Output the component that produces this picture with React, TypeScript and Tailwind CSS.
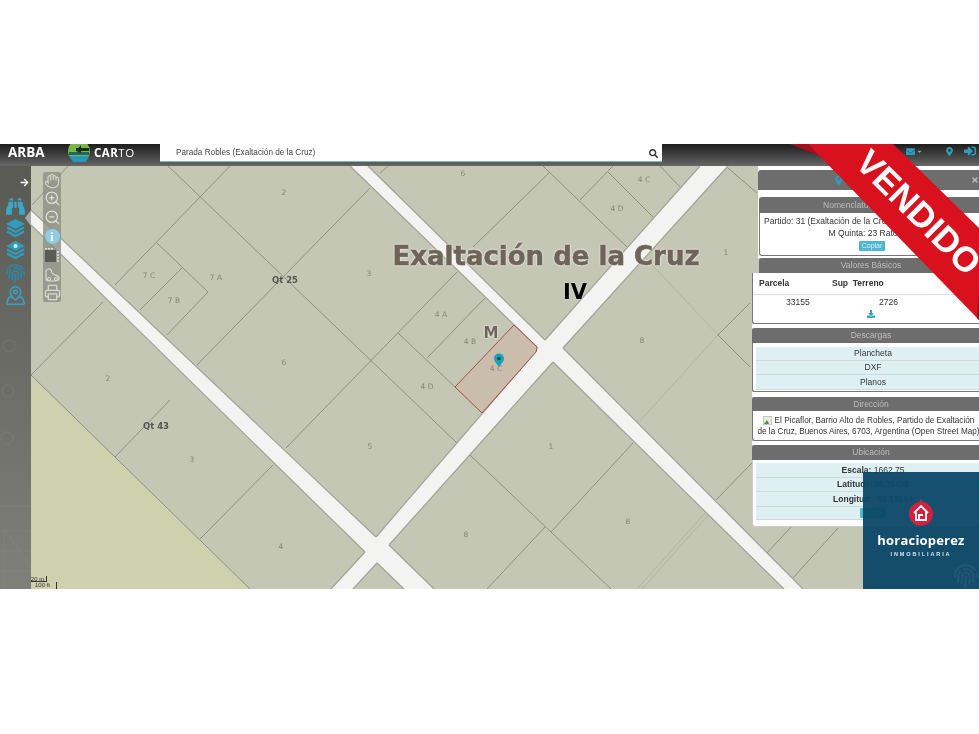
import React from "react";
import { FaBinoculars, FaArrowRight, FaSearch, FaEnvelope, FaCaretDown, FaDownload, FaSignInAlt, FaFingerprint, FaMapMarkerAlt, FaTimes } from "react-icons/fa";
import { Hand, ZoomIn, ZoomOut, Printer, MapPinned } from "lucide-react";

const lines: number[][] = [
  [32,205,68,166],[168,166,457,443],[230,166,115,285],[370,188,197,365],[170,400,115,457],
  [157,243,208,292],[182,268,140,310],[208,292,167,335],[103,302,31,375],[31,375,250,589],
  [200,539,273,465],[380,173,388,166],[543,166,627,247],[580,200,613,166],[608,172,653,217],
  [660,166,680,187],[550,172,473,247],[728,168,757,193],[718,335,750,303],
  [718,335,750,367],[470,455,611,589],[551,532,633,443],[545,527,487,589],
  [457,272,286,448],[398,333,455,387],[427,358,485,298],[752,463,716,500],[791,527,767,553],
  [838,528,793,578],
];
const faint: number[][] = [[640,252,718,335],[718,335,639,422],[705,513,637,589],[710,513,642,589]];
const roadEdges: number[][] = [
  [31,210,376,537],[389,545,434,589],[31,225,365,552],[377,563,404,589],[331,589,365,552],
  [376,537,537,350],[545,340,700,166],[563,348,728,166],[389,545,553,362],[377,563,353,589],
  [350,166,537,347],[553,362,784,589],[368,166,545,340],[563,348,803,589],
];
const labels: [string, number, number][] = [
  ["2",284,193],["6",463,174],["4 C",644,180],["4 D",617,209],["1",726,253],["3",369,274],
  ["7 C",149,276],["7 A",216,278],["7 B",174,301],["6",284,363],["2",108,379],["4 A",441,315],
  ["4 B",470,342],["4 C",496,369],["4 D",427,387],["8",642,341],["5",370,447],["1",551,447],
  ["3",192,460],["8",466,535],["8",628,522],["4",281,547],
];

function Layers({ dot }: { dot?: boolean }) {
  return (
    <svg width="21" height="20" viewBox="0 0 21 20" fill="none" className="text-[#2f9dbd]">
      <path d="M10.500 1 20 6 10.500 11 1 6Z" fill="currentColor" />
      <path d="M2 9.500 10.500 14 19 9.500M2 13.500 10.500 18 19 13.500" stroke="currentColor" strokeWidth="2.400" />
      {dot && <circle cx="10.500" cy="6" r="2" fill="#d8f3fb" />}
    </svg>
  );
}

function Title({ children, className }: { children: React.ReactNode; className: string }) {
  return (
    <div className={`flex items-center justify-center bg-[#6d6d6d] text-[#bdbdbd] rounded-t-[3px] ${className}`}>
      {children}
    </div>
  );
}

function Row({ children, className }: { children: React.ReactNode; className: string }) {
  return (
    <div className={`flex items-center justify-center bg-[#dff0f5] border-b border-[#cfdadd] text-[#333] ${className}`}>
      {children}
    </div>
  );
}

export default function App() {
  return (
    <div className="w-[979px] h-[734px] overflow-hidden bg-white pt-[144px] font-['Liberation_Sans',sans-serif] blur-[0.6px]">
      <div className="relative h-[445px] overflow-hidden bg-[#c5c7b5]">
        {/* map */}
        <svg className="absolute left-0 top-0" width="979" height="445" viewBox="0 144 979 445">
          <polygon points="31,375 250,589 31,589" fill="#cdd1ad" />
          {lines.map((l, i) => (
            <line key={i} x1={l[0]} y1={l[1]} x2={l[2]} y2={l[3]} stroke="#8f9085" strokeWidth="1" />
          ))}
          {faint.map((l, i) => (
            <line key={i} x1={l[0]} y1={l[1]} x2={l[2]} y2={l[3]} stroke="#b3b4a3" strokeWidth="1" />
          ))}
          <polygon points="31,210 376,537 389,545 434,589 404,589 377,563 365,552 31,225" fill="#f3f3f1" />
          <polygon points="331,589 365,552 376,537 537,350 545,340 700,166 728,166 563,348 553,362 389,545 377,563 353,589" fill="#f3f3f1" />
          <polygon points="350,166 537,347 553,362 784,589 803,589 563,348 545,340 368,166" fill="#f3f3f1" />
          {roadEdges.map((l, i) => (
            <line key={i} x1={l[0]} y1={l[1]} x2={l[2]} y2={l[3]} stroke="#a2a396" strokeWidth="1.200" />
          ))}
          <polygon points="514,325 537,347 536,352 482,413 455,387" fill="#cbbdab" stroke="#a84c4c" strokeWidth="1" />
          <path d="M499 367c-3-4-5-6-5-8.500a5 5 0 0 1 10 0c0 2.500-2 4.500-5 8.500Z" fill="#17a2b8" />
          <circle cx="499" cy="358.500" r="1.800" fill="#0b3f4a" />
        </svg>

        {labels.map(([t, x, y], i) => (
          <span
            key={i}
            className="absolute -translate-x-1/2 -translate-y-1/2 whitespace-nowrap font-['DejaVu_Sans',sans-serif] text-[7.500px] text-[#85867c]"
            style={{ left: x, top: y - 144 }}
          >
            {t}
          </span>
        ))}
        <span className="absolute left-[285px] top-[136px] -translate-x-1/2 -translate-y-1/2 font-['DejaVu_Sans',sans-serif] text-[8.500px] font-bold text-[#55564e]">Qt 25</span>
        <span className="absolute left-[156px] top-[282px] -translate-x-1/2 -translate-y-1/2 font-['DejaVu_Sans',sans-serif] text-[8.500px] font-bold text-[#55564e]">Qt 43</span>
        <span className="absolute left-[546px] top-[112px] -translate-x-1/2 -translate-y-1/2 whitespace-nowrap font-['DejaVu_Sans',sans-serif] text-[26px] font-bold text-[#6f6458] [-webkit-text-stroke:0.5px_#6f6458] [text-shadow:0_0_2px_#eee,0_0_2px_#eee,0_0_2px_#eee]">Exaltación de la Cruz</span>
        <span className="absolute left-[491px] top-[189px] -translate-x-1/2 -translate-y-1/2 font-['DejaVu_Sans',sans-serif] text-[15px] font-bold text-[#6f6458] [text-shadow:0_0_2px_#eee,0_0_2px_#eee]">M</span>
        <span className="absolute left-[575px] top-[149px] -translate-x-1/2 -translate-y-1/2 font-['DejaVu_Sans',sans-serif] text-[21px] font-bold text-black [text-shadow:0_0_2px_#eee]">IV</span>

        {/* scale */}
        <div className="absolute left-[28px] bottom-0 w-[29px] h-[13px]">
          <div className="h-[6px] w-[19px] border-l border-r border-b border-[#333] text-[6px] leading-[6px] text-center text-[#333]">20 m</div>
          <div className="h-[7px] w-[29px] border-l border-r border-[#333] text-[6px] leading-[7px] text-center text-[#333]">100 ft</div>
        </div>

        {/* header */}
        <header className="relative flex h-[22px] items-start bg-gradient-to-b from-[#1d1d1d] to-[#666866]">
          <div className="flex w-[160px] shrink-0 items-center h-[17px] leading-[17px]">
            <span className="ml-[8px] w-[59px] text-[13.500px] font-bold text-white font-['Open_Sans',sans-serif]">ARBA</span>
            <svg width="24" height="20" viewBox="0 0 24 20" className="mt-[1px]">
              <circle cx="12" cy="8" r="11" fill="#7ab648" />
              <path d="M2 13h20l-3 6H6Z" fill="#2b96b8" />
              <path d="M2 9h20v3H2Z" fill="#17696f" />
              <path d="M9 5h13v3H9Zm0 3 5-6v8Z" fill="#1f2a22" />
            </svg>
            <span className="ml-[3px] text-[11.500px] font-bold tracking-[0.5px] text-white font-['Open_Sans',sans-serif]">CAR<span className="font-normal">TO</span></span>
          </div>
          <div className="flex h-[18px] w-[502px] shrink-0 items-center justify-between border-b border-[#7fb7bd] bg-white pl-[16px] pr-[4px] pt-[1px] text-[8.200px] text-[#444]">
            <span>Parada Robles (Exaltación de la Cruz)</span>
            <FaSearch className="text-[9px] text-[#333]" />
          </div>
          <div className="flex flex-1 h-[14px] items-center justify-end pr-[3px]">
            <FaEnvelope className="text-[9px] text-[#2f9dbd]" />
            <FaCaretDown className="ml-[1px] mr-[22px] text-[7px] text-[#8aa]" />
            <FaMapMarkerAlt className="mr-[10px] text-[9px] text-[#2f9dbd]" />
            <FaSignInAlt className="text-[12px] text-[#2f9dbd]" />
          </div>
        </header>

        {/* sidebar */}
        <nav className="absolute left-0 top-[22px] bottom-0 w-[31px] overflow-hidden flex flex-col items-center bg-gradient-to-b from-[#5a5a55] to-[#7f807a]">
          <FaArrowRight className="ml-[17px] mt-[12px] text-[9px] text-white" />
          <FaBinoculars className="mt-[10px] text-[19px] text-[#3aa6c8]" />
          <div className="mt-[2px]"><Layers /></div>
          <div className="mt-[2px]"><Layers dot /></div>
          <FaFingerprint className="mt-[4px] text-[19px] text-[#33849f]" />
          <MapPinned size={21} strokeWidth={1.700} className="mt-[2px] text-[#35a3c5]" />
          <svg className="absolute left-[25px] top-[42px]" width="6" height="20" viewBox="0 0 6 20">
            <polygon points="6,2 0,10 6,18" fill="#a6a6a2" />
          </svg>
          <svg className="absolute left-0 top-[170px] opacity-50" width="31" height="253" viewBox="0 0 31 253" fill="none" stroke="#8b8c85" strokeWidth="0.700">
            <circle cx="9" cy="10" r="6" />
            <circle cx="8" cy="55" r="6" />
            <circle cx="7" cy="102" r="6" />
            <path d="M0 170h31M0 195h31M0 215h31M0 235h31M4 195v58M4 192 31 232" />
          </svg>
        </nav>

        {/* tools */}
        <div className="absolute left-[43px] top-[28px] flex h-[130px] w-[18px] flex-col items-center rounded-[2px] bg-[#8d8e85]/80 pt-[1px] text-[#d9d9d4]">
          <Hand size={16} strokeWidth={1.600} />
          <ZoomIn size={17} strokeWidth={1.700} className="mt-[1px] text-[#e0e0dc]" />
          <ZoomOut size={17} strokeWidth={1.700} className="mt-[2px] text-[#e0e0dc]" />
          <span className="mt-[3px] flex h-[15px] w-[15px] items-center justify-center rounded-full bg-[#8fcde6] font-['Liberation_Serif',serif] text-[12px] font-bold text-white">i</span>
          <svg width="16" height="15" viewBox="0 0 16 15" className="mt-[4px]">
            <rect x="1" y="2" width="11" height="12" fill="#5b5b55" />
            <path d="M1 .8h9M13 4h2M13 7h2M13 10h2M13 13h2" stroke="#e0e0dc" strokeWidth="1.600" strokeDasharray="2 1" />
          </svg>
          <svg width="17" height="15" viewBox="0 0 17 15" fill="none" stroke="#d9d9d4" strokeWidth="1.200" className="mt-[4px]">
            <path d="M2 10V4c0-2 4-3 5-1l1 3c1 2 7 2 7 5 0 2-2 3-4 3H4c-2 0-2-2-2-4Z" />
            <circle cx="5" cy="12" r="1.500" />
            <circle cx="12" cy="12" r="1.500" />
          </svg>
          <Printer size={17} strokeWidth={1.800} className="mt-[2px]" />
        </div>

        {/* right panels */}
        <aside className="absolute -right-[11px] top-[22px] flex w-[238px] flex-col text-[8.500px] leading-[11px] text-[#333]">
          <div className="ml-[6px] flex flex-col bg-white pt-[4px]">
            <div className="relative flex h-[20px] items-center justify-center rounded-tl-[3px] bg-[#6d6d6d]">
              <FaMapMarkerAlt className="mr-[70px] text-[10px] text-[#2f9dbd]" />
              <FaTimes className="absolute right-[11px] text-[8px] text-[#bbb]" />
            </div>
            <div className="mt-[7px] flex flex-col">
              <Title className="h-[16px] ml-[1px] pr-[50px]">Nomenclatura</Title>
              <div className="ml-[1px] flex h-[43px] flex-col items-center overflow-hidden rounded-b-[3px] border-l border-b border-[#777] pt-[3px]">
                <span className="self-start whitespace-nowrap pl-[4px]">Partido: 31 (Exaltación de la Cruz) Circunscripción: IV</span>
                <span className="mr-[24px] mt-[1px]">M Quinta: 23 Rato</span>
                <span className="mr-[6px] mt-[2px] rounded-[1px] bg-[#4fb8cf] px-[3px] text-[7px] leading-[10px] text-[#d5f2f8]">Copiar</span>
              </div>
            </div>
            <div className="h-[2px]" />
          </div>
          <Title className="ml-[7px] h-[15px] pr-[7px]">Valores Básicos</Title>
          <div className="flex h-[51px] flex-col rounded-bl-[3px] border-l border-b border-[#777] bg-white">
            <div className="flex h-[22px] items-center border-b border-[#ddd] font-bold">
              <span className="ml-[6px] w-[73px]">Parcela</span>
              <span>Sup&nbsp; Terreno</span>
            </div>
            <div className="flex h-[14px] items-center">
              <span className="ml-[33px] w-[93px]">33155</span>
              <span>2726</span>
            </div>
            <FaDownload className="ml-[114px] mt-[1px] text-[8px] text-[#3a9fc0]" />
          </div>
          <div className="h-[4px] bg-white" />
          <Title className="h-[15px]">Descargas</Title>
          <div className="flex h-[49px] flex-col rounded-bl-[3px] border-l border-b border-[#777] bg-white pl-[3px] pt-[4px]">
            <Row className="h-[14px]">Plancheta</Row>
            <Row className="h-[14px]">DXF</Row>
            <Row className="h-[15px]">Planos</Row>
          </div>
          <div className="h-[5px] bg-white" />
          <Title className="h-[14px]">Dirección</Title>
          <div className="flex h-[30px] flex-col items-center rounded-bl-[3px] border-l border-b border-[#777] bg-white pt-[4px] pr-[6px] whitespace-nowrap text-[8.200px]">
            <span className="flex items-center">
              <svg width="9" height="9" viewBox="0 0 9 9" className="mr-[3px]">
                <rect width="9" height="9" fill="#e6ebe1" stroke="#aaa" />
                <path d="M1 8 4 4l2 4Z" fill="#5a8a3a" />
              </svg>
              El Picaflor, Barrio Alto de Robles, Partido de Exaltación
            </span>
            <span>de la Cruz, Buenos Aires, 6703, Argentina (Open Street Map)</span>
          </div>
          <div className="h-[4px] bg-white" />
          <Title className="h-[15px]">Ubicación</Title>
          <div className="flex h-[67px] flex-col rounded-bl-[4px] border-l border-b border-[#ccc] bg-white pl-[3px] pt-[3px]">
            <Row className="h-[15px]"><b>Escala:</b>&nbsp;1662.75</Row>
            <Row className="h-[14px]"><b>Latitud:</b>&nbsp;-34.39435</Row>
            <Row className="h-[15px]"><b>Longitud:</b>&nbsp;-59.13594</Row>
            <Row className="h-[13px]">
              <span className="rounded-[1px] bg-[#4fb8cf] px-[3px] text-[7px] leading-[10px] text-[#d5f2f8]">Copiar</span>
            </Row>
          </div>
        </aside>

        {/* sold ribbon */}
        <svg className="absolute right-0 top-0" width="189" height="176" viewBox="790 144 189 176">
          <polygon points="790,144 808,144 820,156" fill="#a50f1a" />
          <polygon points="808,144 893,144 979,228 979,320" fill="#d9111e" />
          <polygon points="977,318 979,320 979,292" fill="#8f0d16" />
        </svg>
        <span className="absolute left-[919px] top-[68px] -translate-x-1/2 -translate-y-1/2 rotate-45 whitespace-nowrap text-[35px] leading-none font-bold text-white">VENDIDO</span>

        {/* brand */}
        <div className="absolute bottom-0 right-0 flex h-[117px] w-[116px] flex-col items-center bg-[#0b4768]/95 pt-[27px]">
          <svg width="26" height="28" viewBox="0 0 26 28">
            <path d="M13 0 15 3a12 12 0 1 1-4 0Z" fill="#d2203f" />
            <path d="M6 14 13 7l7 7M8 13v8h10v-8M11 21v-5h4" fill="none" stroke="#fff" strokeWidth="1.800" />
          </svg>
          <span className="mt-[6px] font-['Open_Sans',sans-serif] text-[13px] leading-[14px] font-bold tracking-[0.2px] text-white">horacioperez</span>
          <span className="mt-[3px] text-[5.500px] leading-[8px] font-bold tracking-[1.900px] text-[#d8e4ea]">INMOBILIARIA</span>
          <FaFingerprint className="absolute bottom-[1px] right-[1px] text-[24px] text-white/5" />
        </div>
      </div>
    </div>
  );
}
